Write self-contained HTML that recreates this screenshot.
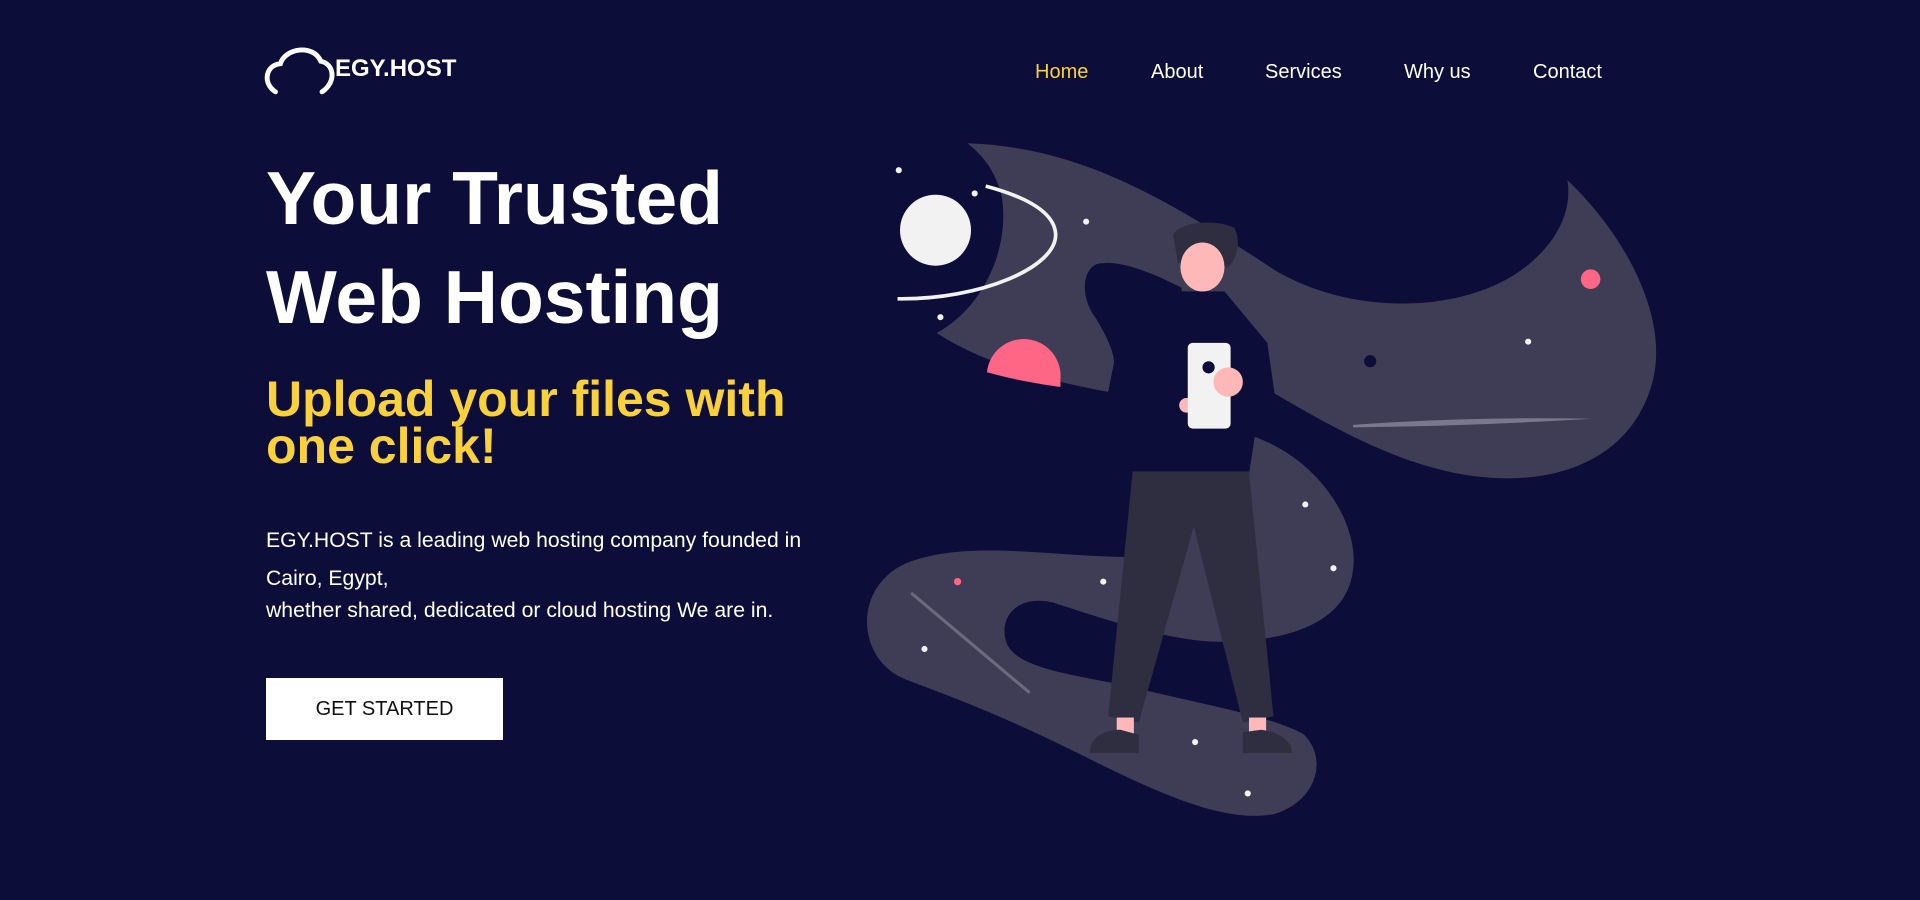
<!DOCTYPE html>
<html><head><meta charset="utf-8"><style>
*{margin:0;padding:0;box-sizing:border-box}
body{width:1920px;height:900px;background:#0c0e39;overflow:hidden;position:relative;font-family:"Liberation Sans",Arial,sans-serif;color:#fff}
.a{position:absolute;white-space:nowrap;line-height:1}
svg{position:absolute;left:0;top:0}
.nav{font-size:20px;top:62px}
.h1{font-size:75px;font-weight:bold;left:266px}
.y{font-size:50px;font-weight:bold;color:#f9d13a;left:266px}
.p{font-size:21.2px;left:266px}
.btn{position:absolute;left:266px;top:678px;width:237px;height:62px;background:#fff;color:#111;font-size:20px;display:flex;align-items:center;justify-content:center}
</style></head><body>
<svg width="1920" height="900" viewBox="0 0 1568 735">
<path d="M225 75 C214 68,217 53,229 52 C233 39,256 36,262 50 C273 52,275 67,263 75" fill="none" stroke="#fff" stroke-width="4" stroke-linecap="round"/>
<!-- upper band -->
<path d="M790 117 C880 120,950 160,1040 220 C1110 262,1210 255,1255 210 C1278 188,1283 165,1280 147 C1330 195,1362 260,1350 310 C1335 370,1280 395,1215 390 C1150 385,1090 350,1035 318 L1000 300 L905 320 C850 310,800 295,765 272 C805 250,825 200,818 160 C813 140,803 127,790 117 Z" fill="#3f3d56"/>
<path d="M733 244 C800 245,865 218,862 190 C860 172,835 160,805 152" fill="none" stroke="#f2f2f2" stroke-width="3"/>
<circle cx="764" cy="188" r="29" fill="#f2f2f2"/>
<path d="M806 304 A30 30 0 0 1 866 310 L866 316 Q835 312 806 304 Z" fill="#ff6584"/>
<!-- lower blob -->
<path d="M1020 355 C1080 375,1110 430,1105 465 C1100 510,1050 525,990 524 C950 522,900 505,860 492 C830 485,815 505,822 525 C830 545,870 550,920 560 C980 575,1040 585,1065 600 C1085 620,1075 655,1040 665 C1000 672,950 650,880 615 C820 585,780 570,740 555 C700 540,695 480,740 460 C790 440,860 455,925 455 L925 385 L1020 385 Z" fill="#3f3d56"/>
<path d="M745 485 L840 565" stroke="#6c6a80" stroke-width="2.5" stroke-linecap="round"/>
<path d="M1105 347 Q1200 340 1300 342 Q1200 348 1105 349 Z" fill="#7a788e"/>
<!-- hole / shirt -->
<path d="M900 215 C885 215,880 240,895 260 C910 285,915 300,905 320 L960 330 L965 235 C940 222,915 213,900 215 Z" fill="#0c0e39"/>
<path d="M960 238 L1000 238 L1035 280 L1045 350 L1025 355 L1020 387 L925 387 L920 322 L905 320 L915 270 Z" fill="#0c0e39"/>
<!-- pants -->
<path d="M925 385 L1020 385 L1040 585 L1015 590 L975 430 L930 590 L905 585 Z" fill="#2f2e41"/>
<rect x="912" y="586" width="14" height="14" fill="#ffb8b8"/><rect x="1020" y="586" width="14" height="14" fill="#ffb8b8"/>
<path d="M890 615 C890 600,905 596,915 596 L930 600 L930 615 Z" fill="#2f2e41"/>
<path d="M1015 615 L1015 598 L1030 596 C1045 598,1055 605,1055 615 Z" fill="#2f2e41"/>
<!-- head -->
<path d="M958 192 C962 182,990 178,1008 186 C1014 198,1010 212,1003 218 L962 215 Z" fill="#2f2e41"/>
<ellipse cx="982" cy="218" rx="18" ry="20" fill="#ffb8b8"/>
<!-- phone -->
<circle cx="969" cy="331" r="6" fill="#ffb8b8"/>
<rect x="970" y="280" width="35" height="70" rx="4" fill="#f2f2f2"/>
<circle cx="987" cy="300" r="5" fill="#0c0e39"/>
<circle cx="1003" cy="312" r="12" fill="#ffb8b8"/>
<!-- dots -->
<g fill="#f2f2f2">
<circle cx="734" cy="139" r="2.5"/><circle cx="796" cy="158" r="2.5"/><circle cx="887" cy="181" r="2.5"/><circle cx="768" cy="259" r="2.5"/><circle cx="1248" cy="279" r="2.5"/><circle cx="1066" cy="412" r="2.5"/><circle cx="1089" cy="464" r="2.5"/><circle cx="901" cy="475" r="2.5"/><circle cx="755" cy="530" r="2.5"/><circle cx="976" cy="606" r="2.5"/><circle cx="1019" cy="648" r="2.5"/>
</g>
<circle cx="1299" cy="228" r="8" fill="#ff6584"/><circle cx="782" cy="475" r="3" fill="#ff6584"/>
<circle cx="1119" cy="295" r="5" fill="#0c0e39"/>
</svg>
<div class="a" style="left:335px;top:57px;font-size:24px;font-weight:bold">EGY.HOST</div>
<div class="a nav" style="left:1035px;color:#f9d13a">Home</div>
<div class="a nav" style="left:1151px">About</div>
<div class="a nav" style="left:1265px">Services</div>
<div class="a nav" style="left:1404px">Why us</div>
<div class="a nav" style="left:1533px">Contact</div>
<div class="a h1" style="top:161px">Your Trusted</div>
<div class="a h1" style="top:260px">Web Hosting</div>
<div class="a y" style="top:374px">Upload your files with</div>
<div class="a y" style="top:421px">one click!</div>
<div class="a p" style="top:530px">EGY.HOST is a leading web hosting company founded in</div>
<div class="a p" style="top:568px">Cairo, Egypt,</div>
<div class="a p" style="top:600px">whether shared, dedicated or cloud hosting We are in.</div>
<div class="btn">GET STARTED</div>
</body></html>
